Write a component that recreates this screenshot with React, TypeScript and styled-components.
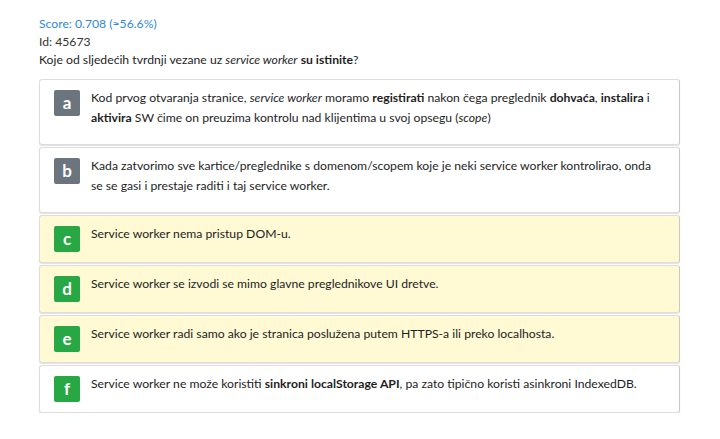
import * as React from 'react';
import styled, { createGlobalStyle } from 'styled-components';

const GlobalStyle = createGlobalStyle`
    body {
        margin: 0;
        background: #ffffff;
        font-family: Lato, "Noto Sans", sans-serif;
        color: #222222;
    }
`;

type Answer = {
    letter: string;
    correct: boolean;
    highlight: boolean;
    text: React.ReactNode;
};

const answers: Answer[] = [
    {
        letter: 'a',
        correct: false,
        highlight: false,
        text: (
            <>
                Kod prvog otvaranja stranice, <em>service worker</em> moramo{' '}
                <b>registirati</b> nakon čega preglednik <b>dohvaća</b>,{' '}
                <b>instalira</b> i <b>aktivira</b> SW čime on preuzima kontrolu
                nad klijentima u svoj opsegu (<em>scope</em>)
            </>
        ),
    },
    {
        letter: 'b',
        correct: false,
        highlight: false,
        text: (
            <>
                Kada zatvorimo sve kartice/preglednike s domenom/scopem koje je
                neki service worker kontrolirao, onda se se gasi i prestaje
                raditi i taj service worker.
            </>
        ),
    },
    {
        letter: 'c',
        correct: true,
        highlight: true,
        text: <>Service worker nema pristup DOM-u.</>,
    },
    {
        letter: 'd',
        correct: true,
        highlight: true,
        text: <>Service worker se izvodi se mimo glavne preglednikove UI dretve.</>,
    },
    {
        letter: 'e',
        correct: true,
        highlight: true,
        text: (
            <>
                Service worker radi samo ako je stranica poslužena putem HTTPS-a
                ili preko localhosta.
            </>
        ),
    },
    {
        letter: 'f',
        correct: true,
        highlight: false,
        text: (
            <>
                Service worker ne može koristiti <b>sinkroni localStorage API</b>,
                pa zato tipično koristi asinkroni IndexedDB.
            </>
        ),
    },
];

const App = () => {
    return (
        <>
            <GlobalStyle />
            <Page>
                <Header>
                    <Score>Score: 0.708 (≈56.6%)</Score>
                    <Meta>Id: 45673</Meta>
                    <Question>
                        Koje od sljedećih tvrdnji vezane uz <em>service worker</em>{' '}
                        <b>su istinite</b>?
                    </Question>
                </Header>
                <List>
                    {answers.map((a) => (
                        <Card key={a.letter} $highlight={a.highlight}>
                            <Badge $correct={a.correct}>{a.letter}</Badge>
                            <AnswerText>{a.text}</AnswerText>
                        </Card>
                    ))}
                </List>
            </Page>
        </>
    );
};

const Page = styled.div`
    padding: 15px 40px 0 39px;
    width: 641px;
`;

const Header = styled.div`
    font-size: 12.2px;
    line-height: 18px;
    margin-bottom: 10px;
`;

const Score = styled.div`
    color: #3089d6;
`;

const Meta = styled.div`
    color: #333333;
`;

const Question = styled.div`
    color: #1e1e1e;
`;

const List = styled.div`
    display: flex;
    flex-direction: column;
    gap: 2px;
`;

const Card = styled.div<{ $highlight: boolean }>`
    display: flex;
    align-items: flex-start;
    gap: 11px;
    padding: 8px 15px 10px 14px;
    background: ${({ $highlight }) => ($highlight ? '#fff9d4' : '#ffffff')};
    border: 1px solid #dddddd;
    border-right-color: #c8c8c8;
    border-radius: 3px;
    box-shadow: 0 1px 1px rgba(0, 0, 0, 0.12);
`;

const Badge = styled.div<{ $correct: boolean }>`
    flex: 0 0 26px;
    height: 26px;
    margin-top: 2px;
    border-radius: 2px;
    background: ${({ $correct }) => ($correct ? '#28a745' : '#6c757d')};
    color: #ffffff;
    font-weight: 700;
    font-size: 17px;
    line-height: 25px;
    text-align: center;
`;

const AnswerText = styled.div`
    font-size: 12.2px;
    line-height: 20px;
    padding-bottom: 6px;
    color: #1e1e1e;
`;

export default App;
